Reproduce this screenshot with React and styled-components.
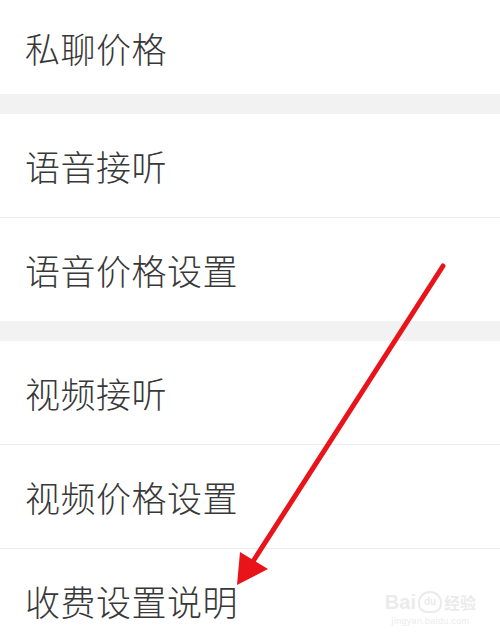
import React from 'react'
import styled, { createGlobalStyle } from 'styled-components'

const Global = createGlobalStyle`
  html, body {
    margin: 0;
    padding: 0;
    background: #fff;
  }
  body {
    font-family: "Noto Sans CJK SC", "Noto Sans", sans-serif;
  }
`

const Page = styled.div`
  position: relative;
  width: 500px;
  height: 638px;
  overflow: hidden;
  background: #fff;
`

const Group = styled.section`
  display: flex;
  flex-direction: column;
  background: #fff;
`

const Gap = styled.div`
  height: 20px;
  background: #f2f2f2;
`

const Row = styled.div`
  display: flex;
  align-items: center;
  height: ${p => p.h || 103}px;
  padding-left: 25px;
  font-size: 35px;
  font-weight: 300;
  color: #383838;
  letter-spacing: 0.5px;
  border-top: ${p => (p.divider ? '1px solid #ececec' : 'none')};
`

const Overlay = styled.svg`
  position: absolute;
  left: 0;
  top: 0;
  pointer-events: none;
`

const Watermark = styled.div`
  position: absolute;
  right: 24px;
  bottom: 12px;
  display: flex;
  flex-direction: column;
  align-items: center;
  color: #ebebeb;
  font-family: "Liberation Sans", sans-serif;
`

const Brand = styled.div`
  display: flex;
  align-items: center;
  gap: 2px;
  font-size: 20px;
  font-weight: bold;
  line-height: 1;
`

const Site = styled.div`
  font-size: 9px;
  margin-top: 3px;
  letter-spacing: 0.3px;
`

const Paw = styled.span`
  display: inline-flex;
  align-items: center;
  justify-content: center;
  width: 20px;
  height: 18px;
  border-radius: 50% 50% 40% 40%;
  border: 2px solid #ebebeb;
  font-size: 10px;
`

const Jing = styled.span`
  font-family: "Noto Sans CJK SC", sans-serif;
  font-size: 16px;
`

const groups = [
  [{ label: '私聊价格', h: 94 }],
  [{ label: '语音接听' }, { label: '语音价格设置' }],
  [{ label: '视频接听' }, { label: '视频价格设置' }, { label: '收费设置说明' }],
]

export default function App() {
  return (
    <Page>
      <Global />
      {groups.map((g, gi) => (
        <React.Fragment key={gi}>
          {gi > 0 && <Gap />}
          <Group>
            {g.map((r, ri) => (
              <Row key={r.label} h={r.h} divider={ri > 0}>
                {r.label}
              </Row>
            ))}
          </Group>
        </React.Fragment>
      ))}
      <Watermark>
        <Brand>
          Bai<Paw>du</Paw>
          <Jing>经验</Jing>
        </Brand>
        <Site>jingyan.baidu.com</Site>
      </Watermark>
      <Overlay width="500" height="638" viewBox="0 0 500 638">
        <line x1="443" y1="266" x2="252" y2="563" stroke="#e8141a" strokeWidth="5" strokeLinecap="round" />
        <polygon points="237,585 240,552 268,569" fill="#e8141a" />
      </Overlay>
    </Page>
  )
}
